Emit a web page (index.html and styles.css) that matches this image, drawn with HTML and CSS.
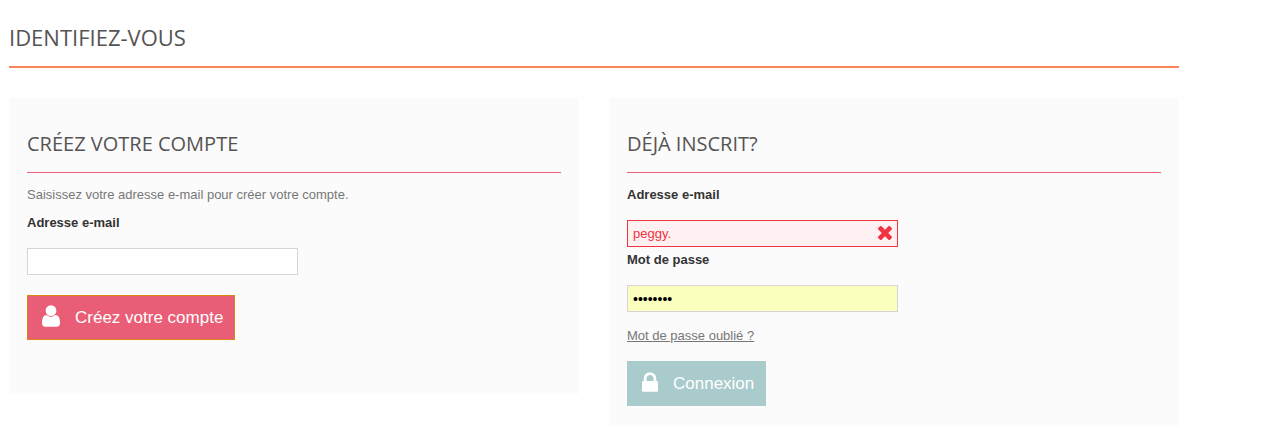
FILE: index.html
```html
<!DOCTYPE html>
<html lang="fr">
<head>
<meta charset="utf-8">
<meta name="viewport" content="width=device-width, initial-scale=1">
<title>Identifiez-vous</title>
<link rel="stylesheet" href="styles.css">
</head>
<body>
<main class="page">
  <h1 class="page-heading">Identifiez-vous</h1>
  <div class="columns">
    <form class="box">
      <h2 class="subheading">Créez votre compte</h2>
      <p class="intro">Saisissez votre adresse e-mail pour créer votre compte.</p>
      <label class="label" for="email-create">Adresse e-mail</label>
      <div class="field"><input class="input" type="email" id="email-create"></div>
      <button class="button button-create" type="button">
        <svg class="icon-user" viewBox="256 128 1280 1536" aria-hidden="true"><path d="M1536 1399q0 109-62.5 187t-150.5 78h-854q-88 0-150.5-78t-62.5-187q0-85 8.500-160.500t31.500-152 58.500-131 94-89 134.500-34.500q131 128 313 128t313-128q76 0 134.500 34.500t94 89 58.500 131 31.500 152 8.500 160.500zm-256-887q0 159-112.500 271.500t-271.500 112.500-271.500-112.500-112.500-271.500 112.500-271.500 271.500-112.500 271.500 112.500 112.500 271.500z"/></svg>
        <span>Créez votre compte</span>
      </button>
    </form>
    <form class="box">
      <h2 class="subheading">Déjà inscrit?</h2>
      <label class="label" for="email">Adresse e-mail</label>
      <div class="field">
        <input class="input input-error" type="text" id="email" value="peggy.">
        <svg class="icon-error" viewBox="302 366 1188 1188" aria-hidden="true"><path d="M1490 1322q0 40-28 68l-136 136q-28 28-68 28t-68-28l-294-294-294 294q-28 28-68 28t-68-28l-136-136q-28-28-28-68t28-68l294-294-294-294q-28-28-28-68t28-68l136-136q28-28 68-28t68 28l294 294 294-294q28-28 68-28t68 28l136 136q28 28 28 68t-28 68l-294 294 294 294q28 28 28 68z"/></svg>
      </div>
      <label class="label" for="passwd">Mot de passe</label>
      <div class="field"><input class="input input-filled" type="password" id="passwd" value="password"></div>
      <p class="lost"><a class="link" href="#">Mot de passe oublié ?</a></p>
      <button class="button button-login" type="button">
        <svg class="icon-lock" viewBox="320 128 1152 1408" aria-hidden="true"><path d="M640 768h512v-192q0-106-75-181t-181-75-181 75-75 181v192zm832 96v576q0 40-28 68t-68 28h-960q-40 0-68-28t-28-68v-576q0-40 28-68t68-28h32v-192q0-184 132-316t316-132 316 132 132 316v192h32q40 0 68 28t28 68z"/></svg>
        <span>Connexion</span>
      </button>
    </form>
  </div>
</main>
</body>
</html>
```
FILE: styles.css
```css
* { box-sizing: border-box; }

body {
  margin: 0;
  background: #fff;
  color: #777;
  font: 13px/18px "Liberation Sans", Arial, sans-serif;
}

.page {
  max-width: 1188px;
  padding: 22px 9px 0;
}

.page-heading,
.subheading {
  font-family: "Open Sans", sans-serif;
  font-weight: 400;
  color: #555454;
  text-transform: uppercase;
}

.page-heading {
  margin: 0 0 30px;
  padding-bottom: 14px;
  border-bottom: 2px solid #fb8358;
  font-size: 22px;
  line-height: 30px;
}

.columns {
  display: grid;
  grid-template-columns: 1fr 1fr;
  gap: 30px;
  align-items: start;
}

.box {
  padding: 32px 18px 20px;
  background: #fbfbfb;
}

.box:first-child { padding-bottom: 54px; }

.subheading {
  margin: 0 0 13px;
  padding-bottom: 14px;
  border-bottom: 1px solid #e95d76;
  font-size: 20px;
  line-height: 28px;
}

.intro { margin: 0 0 10px; }

.label {
  display: block;
  color: #333;
  font-weight: bold;
}

.field {
  position: relative;
  max-width: 271px;
  margin-top: 16px;
}

.field + .label { margin-top: 4px; }

.input {
  display: block;
  width: 100%;
  height: 27px;
  padding: 3px 5px;
  border: 1px solid #d6d4d4;
  border-radius: 0;
  background: #fff;
  color: #000;
  font: inherit;
}

.input-error {
  padding-right: 24px;
  border-color: #f13340;
  background: #fff1f2;
  color: #f13340;
}

.input-filled {
  background: #faffbd;
  font-size: 14px;
}

.icon-error {
  position: absolute;
  top: 6px;
  right: 6px;
  width: 14px;
  height: 14px;
  fill: #f13340;
}

.lost { margin: 15px 0 16px; }

.link { color: #777; text-decoration: underline; }

.button {
  display: flex;
  align-items: center;
  gap: 15px;
  height: 45px;
  padding: 0 11px 0 14px;
  border: 1px solid;
  color: #fff;
  font: 17px/24px "Liberation Sans", Arial, sans-serif;
}

.button svg { margin-bottom: 3px; fill: #fff; }

.field + .button { margin-top: 20px; }

.button-create { border-color: #d88715; background: #e95d76; }

.button-login { border-color: #a9cbcc; background: #a9cbcc; }

.icon-user { width: 18px; height: 22px; }

.icon-lock { width: 16px; height: 20px; }
```
